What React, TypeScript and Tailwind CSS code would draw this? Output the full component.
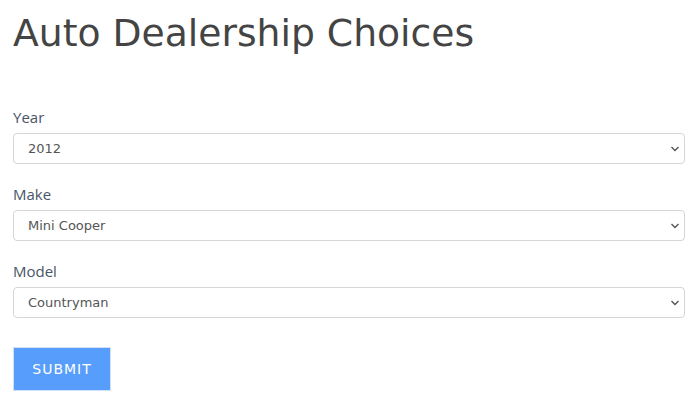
import React from "react";

function Chevron() {
  return (
    <svg width="10" height="8" viewBox="0 0 10 8" className="absolute right-[4px] top-[11px]">
      <path d="M1.5 2 L5 5.5 L8.5 2" fill="none" stroke="#555" strokeWidth="1.4" />
    </svg>
  );
}

function Field({ label, value }: { label: string; value: string }) {
  return (
    <div className="flex flex-col">
      <label className="text-[15px] leading-[20px] text-[#4a5568] mb-[6px]" style={{ fontFamily: '"Open Sans", sans-serif' }}>{label}</label>
      <div className="relative h-[31px] w-[672px] rounded-[4px] border border-[#d6d6d6] bg-white">
        <span className="absolute left-[14px] top-[6px] text-[13px] leading-[18px] text-[#555]" style={{ fontFamily: '"DejaVu Sans", sans-serif' }}>{value}</span>
        <Chevron />
      </div>
    </div>
  );
}

export default function App() {
  return (
    <div className="w-[700px] h-[404px] bg-white pl-[13px] pt-[9px]">
      <h1 className="text-[37.7px] leading-[48px] text-[#444] mb-[50px]" style={{ fontFamily: '"DejaVu Sans", sans-serif' }}>Auto Dealership Choices</h1>
      <div className="flex flex-col gap-[20px]">
        <Field label="Year" value="2012" />
        <Field label="Make" value="Mini Cooper" />
        <Field label="Model" value="Countryman" />
      </div>
      <button className="mt-[29px] w-[98px] h-[44px] bg-[#579dfc] text-white text-[14px] tracking-[1px] border border-[#cfe0f7]" style={{ fontFamily: '"DejaVu Sans", sans-serif' }}>SUBMIT</button>
    </div>
  );
}
